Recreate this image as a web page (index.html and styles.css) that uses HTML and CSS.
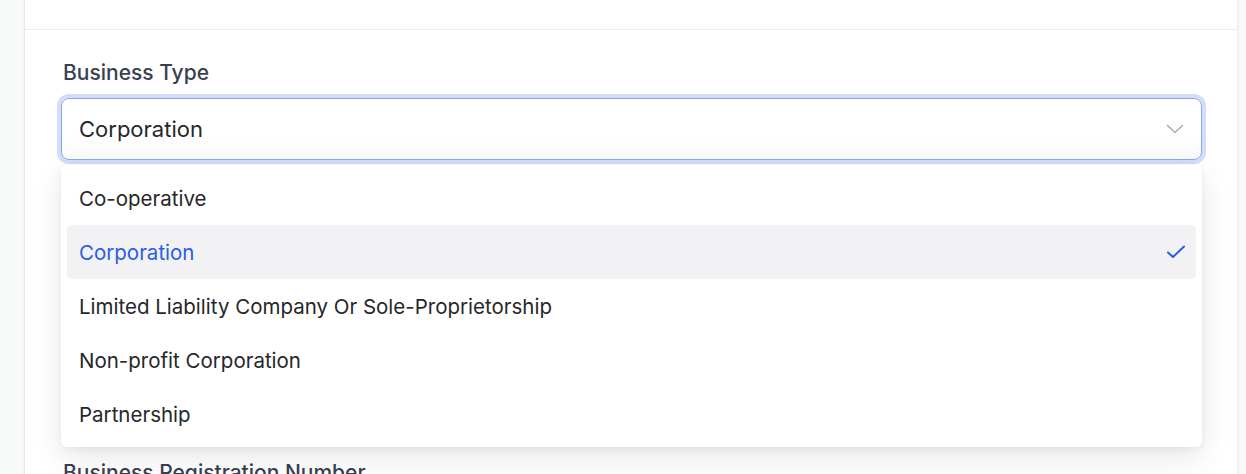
FILE: index.html
```html
<!DOCTYPE html>
<html lang="en">
<head>
<meta charset="utf-8">
<title>Business Type</title>
<link rel="stylesheet" href="styles.css">
</head>
<body>
<div class="page">
  <div class="card">
    <div class="card-header"></div>
    <div class="card-body">
      <div class="field field-select">
        <label class="label">Business Type</label>
        <div class="select">
          <span class="select-value">Corporation</span>
          <svg class="chevron" width="18" height="10" viewBox="0 0 18 10"><path d="M1.5 1.5 L9 8.5 L16.5 1.5" fill="none" stroke="#a8a8ae" stroke-width="1.4" stroke-linecap="round" stroke-linejoin="round"/></svg>
        </div>
        <ul class="menu">
          <li class="option">Co-operative</li>
          <li class="option selected">Corporation
            <svg class="check" width="20" height="16" viewBox="0 0 20 16"><path d="M2 8.5 L7 13 L18 2.5" fill="none" stroke="#2b5ce6" stroke-width="2" stroke-linecap="round" stroke-linejoin="round"/></svg>
          </li>
          <li class="option">Limited Liability Company Or Sole-Proprietorship</li>
          <li class="option">Non-profit Corporation</li>
          <li class="option">Partnership</li>
        </ul>
      </div>
      <div class="field">
        <label class="label">Business Registration Number</label>
        <div class="input"></div>
      </div>
    </div>
  </div>
</div>
</body>
</html>
```

FILE: styles.css
```css
* { box-sizing: border-box; }
html, body { margin: 0; padding: 0; }
body {
  background: #f8fafa;
  font-family: Inter, "Noto Sans", "Liberation Sans", sans-serif;
  overflow: hidden;
  height: 474px;
}
.page {
  padding-left: 24px;
  padding-right: 8px;
}
.card {
  background: #ffffff;
  border-left: 1px solid #e6e7ea;
  border-right: 1px solid #ebecee;
  box-shadow: 0 0 3px rgba(0, 0, 0, 0.05);
  min-height: 474px;
}
.card-header {
  height: 30px;
  border-bottom: 1px solid #ececee;
}
.card-body {
  padding: 30px 35px 0 36px;
  display: flex;
  flex-direction: column;
  gap: 300px;
}
.field {
  display: flex;
  flex-direction: column;
}
.field-select {
  position: relative;
  z-index: 2;
}
.label {
  font-size: 21px;
  font-weight: 500;
  line-height: 26px;
  color: #374151;
  margin-bottom: 12px;
  padding-left: 2px;
}
.select, .input {
  height: 62px;
  border: 1px solid #e4e4e7;
  border-radius: 8px;
  background: #fff;
}
.select {
  display: flex;
  align-items: center;
  justify-content: space-between;
  padding: 0 17px 0 17px;
  border-color: #8aa6f0;
  box-shadow: 0 0 0 4px #d3ddfa;
  background: linear-gradient(#ffffff 55%, #fafafa);
}
.select-value {
  font-size: 22px;
  color: #27272a;
}
.menu {
  position: absolute;
  top: 105px;
  left: 0;
  right: 0;
  margin: 0;
  padding: 6px;
  list-style: none;
  background: #fff;
  border-radius: 6px;
  box-shadow: 0 10px 30px rgba(0, 0, 0, 0.10), 0 2px 6px rgba(0, 0, 0, 0.05);
}
.option {
  height: 54px;
  display: flex;
  align-items: center;
  justify-content: space-between;
  padding: 0 10px 0 12px;
  font-size: 20.5px;
  color: #27272a;
  border-radius: 5px;
}
.option.selected {
  background: #f2f2f5;
  color: #2b5ce6;
}
```
